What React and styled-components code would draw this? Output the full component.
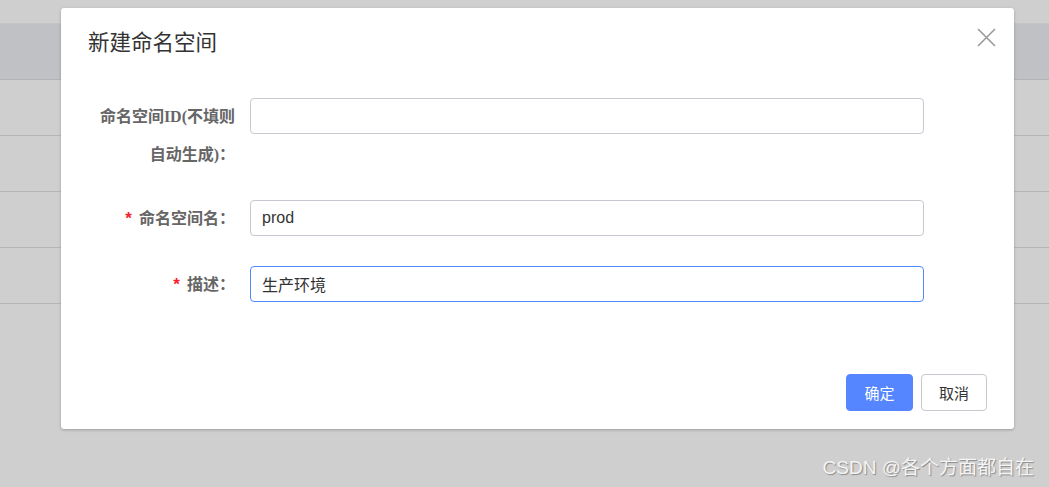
import React from "react";
import styled, { createGlobalStyle } from "styled-components";

const GlobalStyle = createGlobalStyle`
  html, body {
    margin: 0;
    padding: 0;
    background: #cfcfcf;
    font-family: "Liberation Sans", "Noto Sans CJK SC", sans-serif;
  }
`;

const Page = styled.div`
  position: relative;
  width: 1049px;
  height: 487px;
  overflow: hidden;
  background: #cfcfcf;
`;

const Table = styled.div`
  display: flex;
  flex-direction: column;
  padding-top: 23px;
`;

const HeadRow = styled.div`
  height: 55px;
  background: #c0c1c5;
  border-top: 1px solid #c4c4c4;
  border-bottom: 1px solid #b4b4b6;
`;

const BodyRow = styled.div`
  height: 55px;
  border-bottom: 1px solid #b5b5b5;
`;

const Dialog = styled.div`
  position: absolute;
  left: 61px;
  top: 8px;
  width: 953px;
  height: 421px;
  box-sizing: border-box;
  background: #fff;
  border-radius: 3px;
  box-shadow: 0 1px 3px rgba(0, 0, 0, 0.25);
  display: flex;
  flex-direction: column;
`;

const Header = styled.div`
  display: flex;
  align-items: center;
  justify-content: space-between;
  padding: 17px 18px 3px 27px;
  height: 30px;
`;

const Title = styled.h3`
  margin: 0;
  font-size: 21.5px;
  font-weight: 400;
  color: #333;
  font-family: "Noto Sans CJK SC", sans-serif;
`;

const Close = styled.button`
  align-self: flex-start;
  margin-top: 2px;
  border: none;
  background: none;
  padding: 0;
  width: 20px;
  height: 20px;
  display: flex;
  align-items: center;
  justify-content: center;
  cursor: pointer;
`;

const Form = styled.form`
  display: flex;
  flex-direction: column;
  padding: 40px 90px 0 27px;
  flex: 1;
`;

const Row = styled.div`
  display: flex;
  align-items: flex-start;
  margin-bottom: ${(p) => p.$gap}px;
`;

const Label = styled.label`
  width: 162px;
  flex: none;
  box-sizing: border-box;
  padding-right: 15px;
  text-align: right;
  font-size: 16px;
  font-weight: 700;
  line-height: 38px;
  color: #666;
  font-family: "Liberation Serif", "Noto Sans CJK SC", serif;
`;

const Star = styled.span`
  color: #f5222d;
  margin-right: 7px;
  font-size: 17px;
  font-family: "Liberation Sans", sans-serif;
`;

const Input = styled.input`
  flex: 1;
  height: 36px;
  box-sizing: border-box;
  border: 1px solid ${(p) => (p.$focus ? "#4f8bff" : "#c8c8d0")};
  border-radius: 4px;
  padding: 0 11px;
  font-size: 16px;
  color: #333;
  outline: none;
  font-family: "Liberation Sans", "Noto Sans CJK SC", sans-serif;
`;

const Footer = styled.div`
  display: flex;
  justify-content: flex-end;
  gap: 8px;
  padding: 0 27px 18px 0;
`;

const Button = styled.button`
  height: 37px;
  width: ${(p) => (p.$primary ? 67 : 66)}px;
  border-radius: 4px;
  border: 1px solid ${(p) => (p.$primary ? "#5586ff" : "#c8c8d0")};
  background: ${(p) => (p.$primary ? "#5586ff" : "#fff")};
  color: ${(p) => (p.$primary ? "#fff" : "#333")};
  font-size: 15px;
  font-family: "Noto Sans CJK SC", sans-serif;
  cursor: pointer;
`;

const Watermark = styled.div`
  position: absolute;
  right: 15px;
  bottom: 8px;
  font-size: 19px;
  color: #f4f4f4;
  text-shadow: 1px 1px 1px #8a8a8a;
  font-family: "Liberation Sans", "Noto Sans CJK SC", sans-serif;
`;

export default function App() {
  return (
    <Page>
      <GlobalStyle />
      <Table>
        <HeadRow />
        <BodyRow />
        <BodyRow />
        <BodyRow />
        <BodyRow />
      </Table>
      <Dialog>
        <Header>
          <Title>新建命名空间</Title>
          <Close aria-label="close">
            <svg width="19" height="19" viewBox="0 0 19 19">
              <path d="M1 1L18 18M18 1L1 18" stroke="#9a9a9a" strokeWidth="1.6" />
            </svg>
          </Close>
        </Header>
        <Form>
          <Row $gap={26}>
            <Label>命名空间ID(不填则自动生成)：</Label>
            <Input defaultValue="" />
          </Row>
          <Row $gap={28}>
            <Label>
              <Star>*</Star>命名空间名：
            </Label>
            <Input defaultValue="prod" />
          </Row>
          <Row $gap={0}>
            <Label>
              <Star>*</Star>描述：
            </Label>
            <Input $focus defaultValue="生产环境" />
          </Row>
        </Form>
        <Footer>
          <Button $primary>确定</Button>
          <Button>取消</Button>
        </Footer>
      </Dialog>
      <Watermark>CSDN @各个方面都自在</Watermark>
    </Page>
  );
}
